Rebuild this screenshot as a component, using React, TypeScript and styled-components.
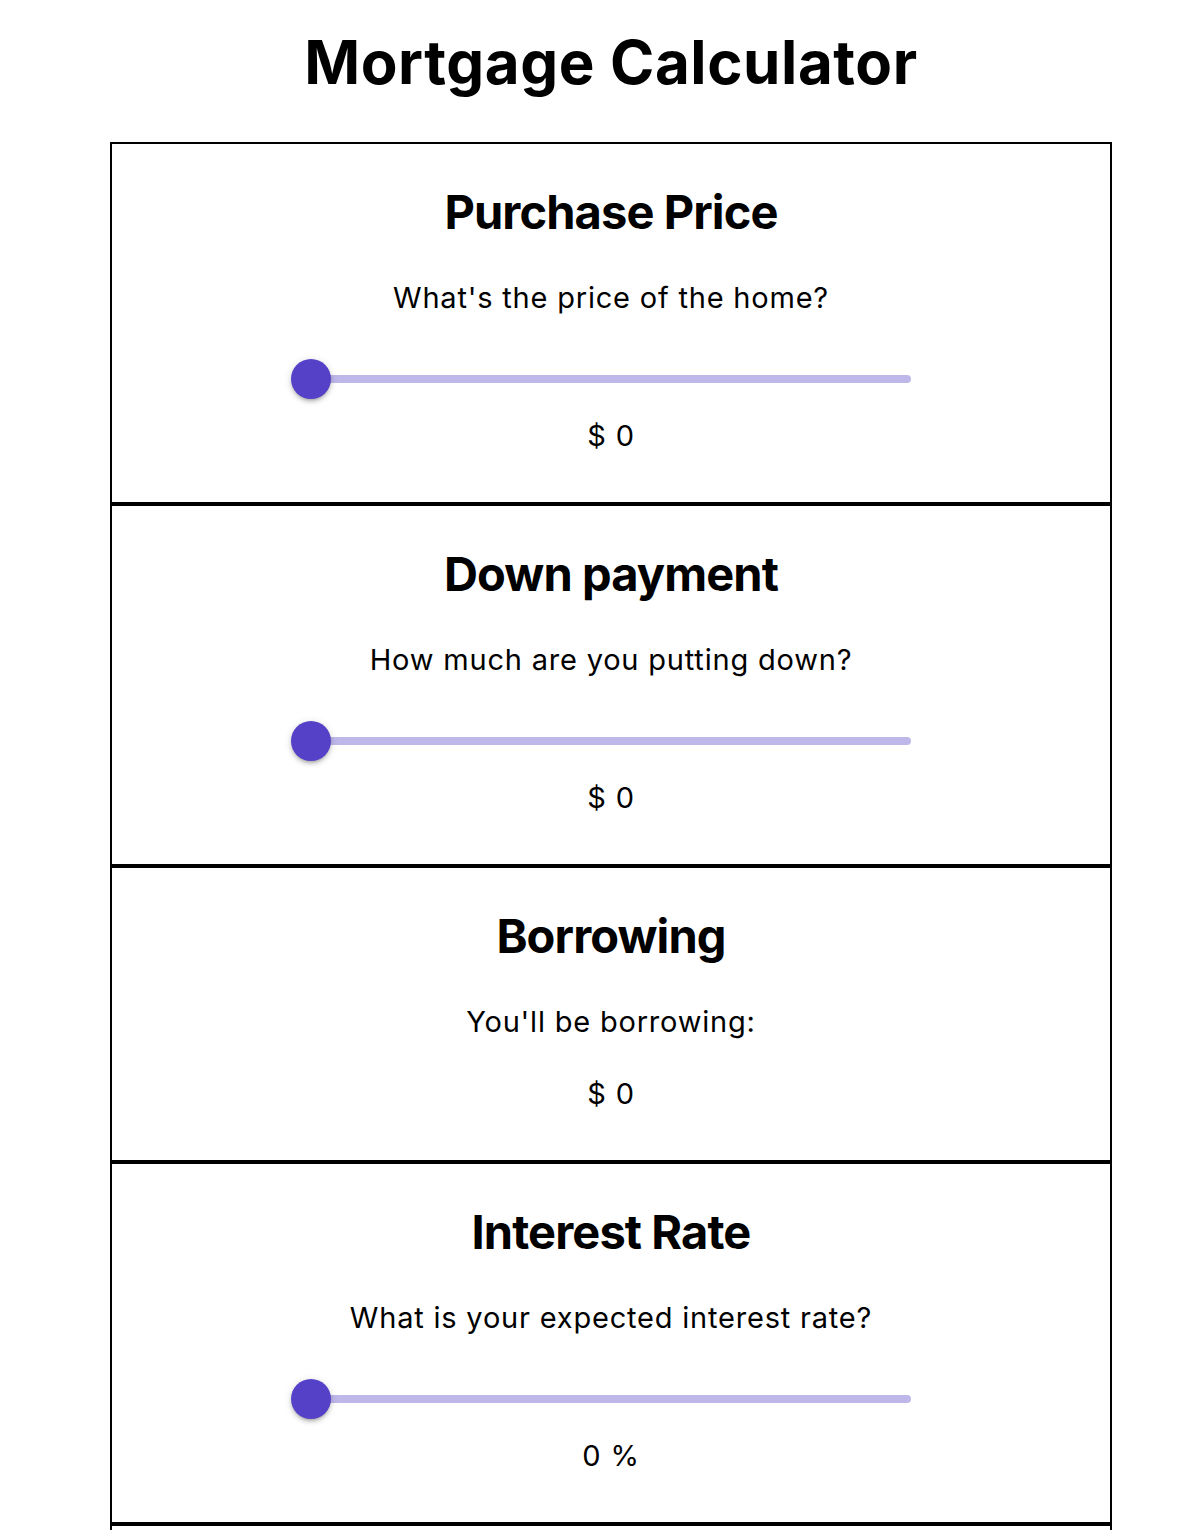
import React from "react";
import styled, { createGlobalStyle } from "styled-components";

const GlobalStyle = createGlobalStyle`
  html, body {
    margin: 0;
    padding: 0;
    background: #ffffff;
  }
  body {
    font-family: Inter, "Noto Sans", "Liberation Sans", sans-serif;
    color: #000000;
  }
`;

const ACCENT = "#5541c8";

const Page = styled.main`
  width: 1002px;
  margin-left: 110px;
`;

const Title = styled.h1`
  margin: 0;
  padding-top: 26px;
  margin-bottom: 44px;
  font-size: 60px;
  line-height: 72px;
  font-weight: 700;
  letter-spacing: 0.6px;
  text-align: center;
`;

const Card = styled.section`
  display: flex;
  flex-direction: column;
  align-items: center;
  border: 2px solid #000000;
  padding: 39px 0 45px;
`;

const Heading = styled.h2`
  margin: 0;
  font-size: 47px;
  line-height: 58px;
  font-weight: 700;
  letter-spacing: -0.9px;
`;

const Prompt = styled.p`
  margin: 36px 0 0;
  font-size: 29px;
  line-height: 42px;
  font-weight: 400;
  letter-spacing: 0.8px;
`;

const Value = styled.p<{ $afterSlider?: boolean }>`
  margin: ${(p) => (p.$afterSlider ? "16px" : "30px")} 0 0;
  font-size: 29px;
  line-height: 42px;
  font-weight: 400;
  letter-spacing: 0.8px;
`;

const SliderWrap = styled.div`
  position: relative;
  width: 600px;
  height: 40px;
  margin-top: 40px;
  display: flex;
  align-items: center;
`;

const Track = styled.div`
  width: 100%;
  height: 8px;
  border-radius: 4px;
  background: rgba(85, 65, 200, 0.38);
`;

const Thumb = styled.div`
  position: absolute;
  top: 0;
  width: 40px;
  height: 40px;
  margin-left: -20px;
  border-radius: 50%;
  background: ${ACCENT};
  box-shadow: 0 3px 3px -2px rgba(0, 0, 0, 0.2), 0 3px 4px 0 rgba(0, 0, 0, 0.14),
    0 1px 8px 0 rgba(0, 0, 0, 0.12);
`;

interface SliderProps {
  value: number;
  max: number;
}

const Slider: React.FC<SliderProps> = ({ value, max }) => {
  const pct = max > 0 ? (value / max) * 100 : 0;
  return (
    <SliderWrap>
      <Track />
      <Thumb style={{ left: `${pct}%` }} />
    </SliderWrap>
  );
};

interface Field {
  title: string;
  prompt: string;
  display: string;
  slider?: { value: number; max: number };
}

const fields: Field[] = [
  {
    title: "Purchase Price",
    prompt: "What's the price of the home?",
    display: "$ 0",
    slider: { value: 0, max: 1000000 },
  },
  {
    title: "Down payment",
    prompt: "How much are you putting down?",
    display: "$ 0",
    slider: { value: 0, max: 1000000 },
  },
  {
    title: "Borrowing",
    prompt: "You'll be borrowing:",
    display: "$ 0",
  },
  {
    title: "Interest Rate",
    prompt: "What is your expected interest rate?",
    display: "0 %",
    slider: { value: 0, max: 20 },
  },
  {
    title: "Loan Term",
    prompt: "How long is the mortgage?",
    display: "0 years",
    slider: { value: 0, max: 30 },
  },
];

export default function App() {
  return (
    <>
      <GlobalStyle />
      <Page>
        <Title>Mortgage Calculator</Title>
        {fields.map((f) => (
          <Card key={f.title}>
            <Heading>{f.title}</Heading>
            <Prompt>{f.prompt}</Prompt>
            {f.slider && <Slider value={f.slider.value} max={f.slider.max} />}
            <Value $afterSlider={!!f.slider}>{f.display}</Value>
          </Card>
        ))}
      </Page>
    </>
  );
}
